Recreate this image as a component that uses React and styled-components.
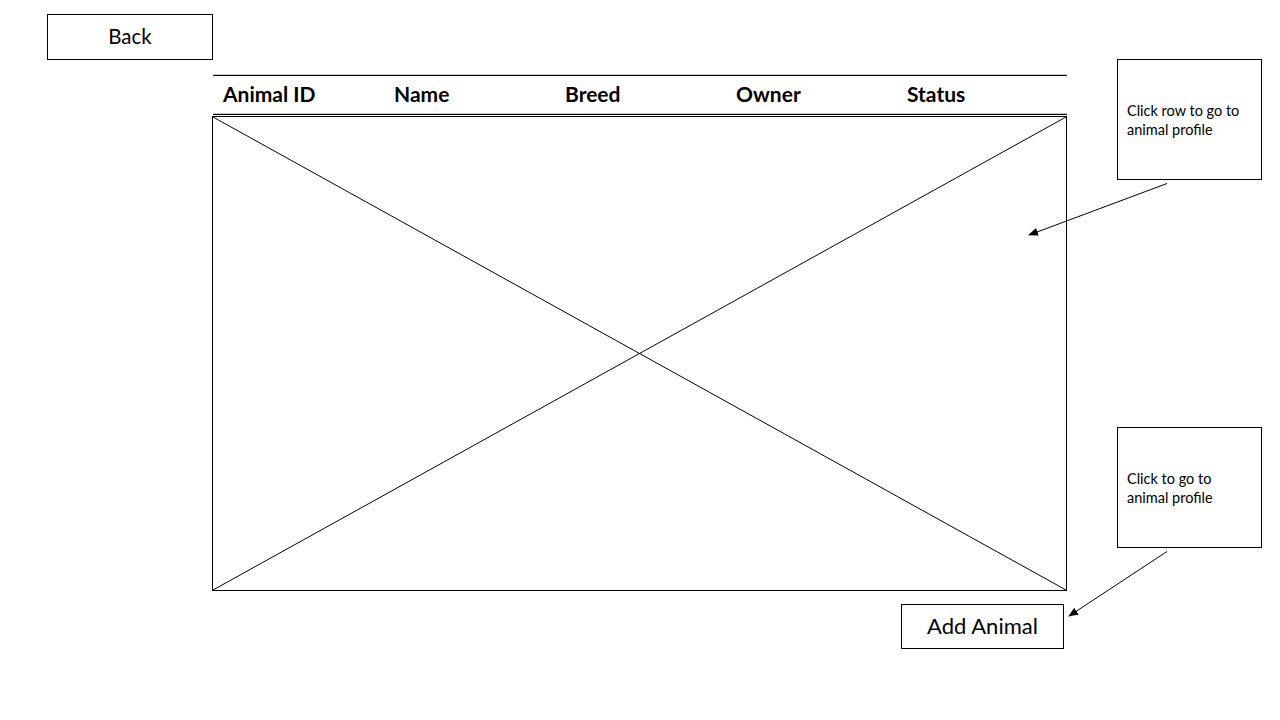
import React from "react";
import styled, { createGlobalStyle } from "styled-components";

const Global = createGlobalStyle`
  html, body { margin: 0; padding: 0; background: #fff; }
  body { font-family: Lato, "Open Sans", "Liberation Sans", sans-serif; color: #000; }
  * { box-sizing: border-box; }
`;

const Page = styled.div`
  position: relative;
  width: 1280px;
  height: 720px;
  padding: 14px 0 0 47px;
  overflow: hidden;
`;

const BoxButton = styled.div`
  display: flex;
  align-items: center;
  justify-content: center;
  width: ${(p) => p.$w}px;
  height: ${(p) => p.$h}px;
  padding-bottom: 2px;
  border: 1px solid #000;
  font-size: ${(p) => p.$size}px;
  background: #fff;
`;

const Main = styled.div`
  display: flex;
  align-items: flex-start;
  margin-left: 165px;
  margin-top: -1px;
  gap: 50px;
`;

const TableColumn = styled.div`
  width: 855px;
  margin-top: 16px;
  display: flex;
  flex-direction: column;
`;

const HeaderRow = styled.div`
  display: grid;
  grid-template-columns: repeat(5, 171px);
  height: 40px;
  padding: 0 0 3px 10px;
  margin-left: 1px;
  align-items: center;
  border-top: 1px solid #000;
  border-bottom: 1px solid #000;
  box-shadow: 0 -1px 0 #c8c8c8, inset 0 -1px 0 #c8c8c8;
`;

const HeaderCell = styled.div`
  font-weight: 700;
  font-size: 21px;
`;

const Placeholder = styled.div`
  margin-top: 1px;
  height: 475px;
  border: 1px solid #000;
`;

const Cross = styled.svg`
  display: block;
  width: 100%;
  height: 100%;
`;

const ActionRow = styled.div`
  display: flex;
  justify-content: flex-end;
  padding-right: 3px;
  margin-top: 13px;
`;

const SideColumn = styled.div`
  display: flex;
  flex-direction: column;
  gap: 247px;
`;

const Note = styled.div`
  width: 145px;
  height: 121px;
  border: 1px solid #000;
  display: flex;
  align-items: center;
  padding: 0 9px;
  font-size: 14.5px;
  line-height: 19px;
`;

const Arrows = styled.svg`
  position: absolute;
  left: 0;
  top: 0;
  width: 1280px;
  height: 720px;
  pointer-events: none;
`;

const columns = ["Animal ID", "Name", "Breed", "Owner", "Status"];

export default function App() {
  return (
    <>
      <Global />
      <Page>
        <BoxButton $w={166} $h={46} $size={20.5}>Back</BoxButton>
        <Main>
          <TableColumn>
            <HeaderRow>
              {columns.map((c) => (
                <HeaderCell key={c}>{c}</HeaderCell>
              ))}
            </HeaderRow>
            <Placeholder>
              <Cross viewBox="0 0 853 473" preserveAspectRatio="none">
                <line x1="0" y1="0" x2="853" y2="473" stroke="#000" strokeWidth="1" />
                <line x1="853" y1="0" x2="0" y2="473" stroke="#000" strokeWidth="1" />
              </Cross>
            </Placeholder>
            <ActionRow>
              <BoxButton $w={163} $h={45} $size={22}>Add Animal</BoxButton>
            </ActionRow>
          </TableColumn>
          <SideColumn>
            <Note>Click row to go to animal profile</Note>
            <Note>Click to go to animal profile</Note>
          </SideColumn>
        </Main>
        <Arrows viewBox="0 0 1280 720">
          <defs>
            <marker id="head" markerWidth="10" markerHeight="8" refX="9" refY="4" orient="auto" markerUnits="userSpaceOnUse">
              <path d="M0,0 L10,4 L0,8 Z" fill="#000" />
            </marker>
          </defs>
          <line x1="1167" y1="183.5" x2="1029" y2="235" stroke="#000" strokeWidth="1" markerEnd="url(#head)" />
          <line x1="1167" y1="551.5" x2="1069" y2="616" stroke="#000" strokeWidth="1" markerEnd="url(#head)" />
        </Arrows>
      </Page>
    </>
  );
}
